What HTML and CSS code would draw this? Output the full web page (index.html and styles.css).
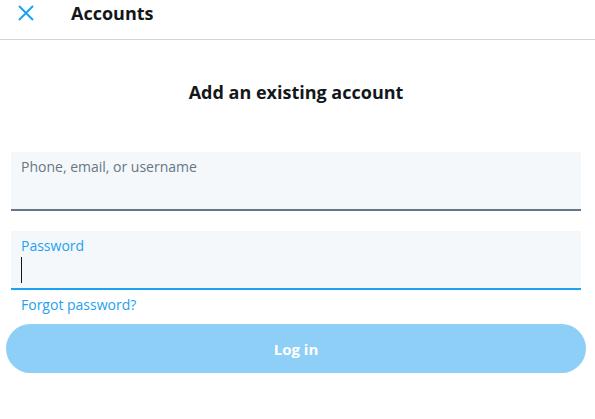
FILE: index.html
```html
<!DOCTYPE html>
<html lang="en">
<head>
    <meta charset="UTF-8">
    <meta name="viewport" content="width=device-width, initial-scale=1.0">
    <title>Accounts</title>
    <link rel="stylesheet" href="styles.css">
</head>
<body>
<div class="header">
    <button class="close" aria-label="Close">
        <svg width="18" height="18" viewBox="0 0 18 18">
            <path d="M2 2 L16 16 M16 2 L2 16" stroke="#1da1f2" stroke-width="2" fill="none"/>
        </svg>
    </button>
    <h1>Accounts</h1>
</div>
<div class="content">
    <h2>Add an existing account</h2>
    <label class="field">
        <span class="field-label">Phone, email, or username</span>
        <input type="text">
    </label>
    <label class="field focused">
        <span class="field-label">Password</span>
        <span class="caret"></span>
    </label>
    <a class="forgot" href="#">Forgot password?</a>
    <button class="login" disabled>Log in</button>
</div>
</body>
</html>
```

FILE: styles.css
```css
body {
    margin: 0;
    font-family: "Open Sans", "Noto Sans", sans-serif;
    background-color: #ffffff;
    color: #14171a;
}
.header {
    display: flex;
    align-items: center;
    height: 39px;
    border-bottom: 1px solid #ccd6dd;
    margin-top: -10px;
    padding-top: 10px;
}
.close {
    background: none;
    border: none;
    padding: 0;
    margin-left: 17px;
    margin-top: -14px;
    width: 18px;
    height: 18px;
}
.header h1 {
    margin: 0 0 0 36px;
    margin-top: -13px;
    font-size: 18px;
    font-weight: 700;
}
.content {
    padding: 0 14px 0 11px;
}
.content h2 {
    margin: 40px 0 0;
    text-align: center;
    font-size: 18px;
    font-weight: 700;
    line-height: 24px;
}
.field {
    display: block;
    margin-top: 48px;
    padding: 5px 10px 0;
    box-sizing: border-box;
    background-color: #f5f8fa;
    border-bottom: 2px solid #657786;
    height: 59px;
}
.field + .field {
    margin-top: 20px;
}
.field-label {
    display: block;
    font-size: 14px;
    line-height: 20px;
    color: #657786;
}
.field input {
    border: none;
    background: none;
    outline: none;
    width: 100%;
    font-size: 16px;
    padding: 0;
}
.focused {
    border-bottom-color: #1da1f2;
}
.focused .field-label {
    color: #1da1f2;
}
.caret {
    display: block;
    width: 1px;
    height: 26px;
    margin-top: 1px;
    background-color: #14171a;
}
.forgot {
    display: block;
    margin: 5px 0 0 10px;
    font-size: 14px;
    line-height: 20px;
    color: #1da1f2;
    text-decoration: none;
}
.login {
    display: block;
    width: 580px;
    height: 49px;
    margin: 9px 0 0 -5px;
    border: none;
    border-radius: 25px;
    background-color: #8ecff8;
    color: #ffffff;
    font-family: inherit;
    font-size: 15px;
    font-weight: 700;
}
```
